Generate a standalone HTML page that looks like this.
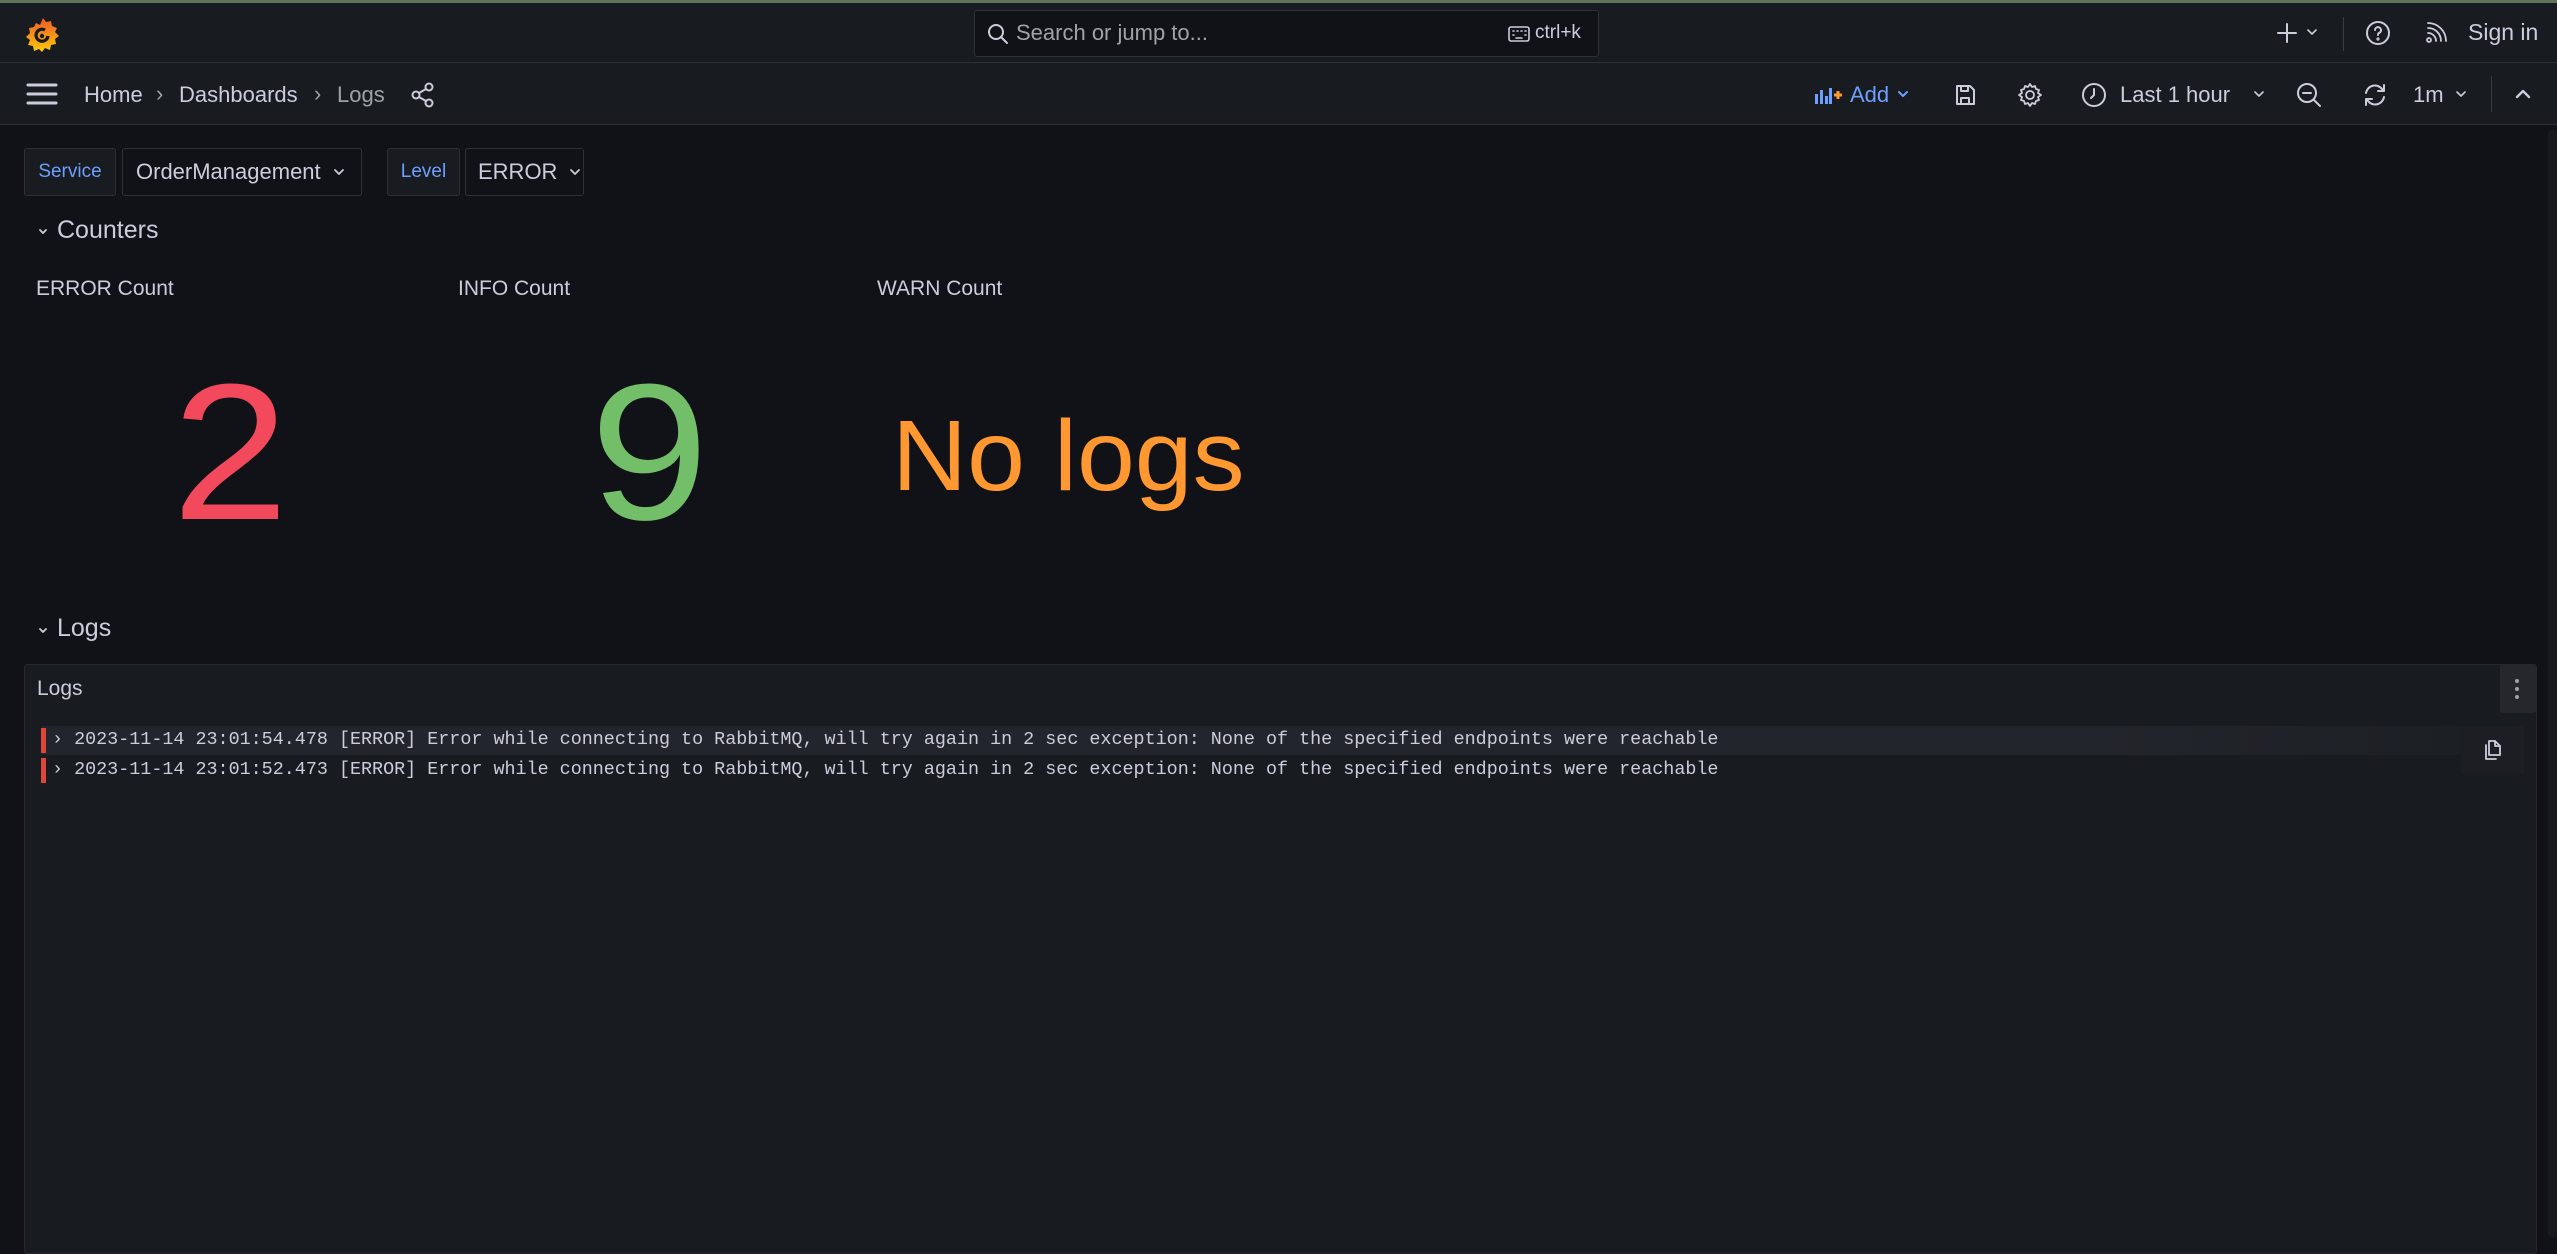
<!DOCTYPE html>
<html><head><meta charset="utf-8"><style>
*{margin:0;padding:0;box-sizing:border-box}
body{width:2557px;height:1237px;background:#111217;font-family:"Liberation Sans",sans-serif;color:#ccccdc;position:relative;overflow:hidden}
.a{position:absolute}
.ic{position:absolute;fill:none;stroke:#ccccdc;stroke-width:2;stroke-linecap:round;stroke-linejoin:round}
.box{position:absolute;border:1px solid #2d3037;border-radius:3px;height:48px;display:flex;align-items:center;font-size:22px;white-space:nowrap}
.mono{font-family:"Liberation Mono",monospace;font-size:18.4px;color:#ccccdc;white-space:pre}
</style></head><body>
<div class="a" style="left:0;top:0;width:2557px;height:3px;background:#5f7358"></div>
<div class="a" style="left:0;top:3px;width:2557px;height:60px;background:#181b1f;border-bottom:1px solid #2c2f35"></div>
<div class="a" style="left:0;top:63px;width:2557px;height:62px;background:#181b1f;border-bottom:1px solid #2c2f35"></div>
<!-- logo -->
<svg class="a" style="left:24px;top:17px" width="38" height="36" viewBox="0 0 38 36"><defs><linearGradient id="g" x1="0" y1="0" x2="0" y2="1"><stop offset="0" stop-color="#f05a28"/><stop offset="1" stop-color="#fbca0a"/></linearGradient></defs><path d="M19 1l3 4 5-1 1 5 5 2-2 4 4 4-4 3 1 5-5 1-1 5-5-2-3 4-3-3-5 2-1-5-5-1 2-5-4-3 4-4-1-5 5-1 2-4 4 2z" fill="url(#g)"/><path d="M24 19a6 6 0 1 1-3-6" fill="none" stroke="#181b1f" stroke-width="3.2"/><circle cx="18" cy="19" r="2.2" fill="#181b1f"/></svg>
<!-- search -->
<div class="a" style="left:974px;top:10px;width:625px;height:47px;background:#111217;border:1px solid #2d3037;border-radius:3px"></div>
<svg class="ic" style="left:987px;top:23px" width="22" height="22" viewBox="0 0 22 22"><circle cx="9" cy="9" r="7"/><path d="M14 14l6 6"/></svg>
<div class="a" style="left:1016px;top:20px;font-size:22px;color:#a0a2ab">Search or jump to...</div>
<svg class="ic" style="left:1508px;top:26px;stroke-width:1.6" width="22" height="16" viewBox="0 0 22 16"><rect x="1" y="1" width="20" height="14" rx="2"/><path d="M5 5h1M9 5h1M13 5h1M17 5h1M5 9h1M17 9h1M8 12h6"/></svg>
<div class="a" style="left:1535px;top:22px;font-size:19px;color:#ccccdc">ctrl+k</div>
<!-- top right -->
<svg class="ic" style="left:2276px;top:22px" width="22" height="22" viewBox="0 0 22 22"><path d="M11 2v18M2 11h18"/></svg>
<svg class="ic" style="left:2306px;top:28px;stroke-width:1.6" width="12" height="8" viewBox="0 0 12 8"><path d="M2 2l4 4 4-4"/></svg>
<div class="a" style="left:2343px;top:17px;width:1px;height:34px;background:#3a3d44"></div>
<svg class="ic" style="left:2365px;top:20px" width="26" height="26" viewBox="0 0 26 26"><circle cx="13" cy="13" r="11"/><path d="M10 10a3 3 0 1 1 4 3c-1 .5-1 1-1 2"/><circle cx="13" cy="19" r=".6"/></svg>
<svg class="ic" style="left:2425px;top:22px;stroke-width:1.8" width="22" height="22" viewBox="0 0 22 22"><circle cx="4" cy="18" r="2"/><path d="M3 11a8 8 0 0 1 8 8M3 6a13 13 0 0 1 13 13M3 1a18 18 0 0 1 18 18"/></svg>
<div class="a" style="left:2468px;top:19px;font-size:23px;color:#ccccdc">Sign in</div>
<!-- second bar -->
<svg class="ic" style="left:26px;top:82px;stroke-width:3" width="32" height="24" viewBox="0 0 32 24"><path d="M2 3h28M2 12h28M2 21h28"/></svg>
<div class="a" style="left:84px;top:82px;font-size:22px;color:#ccccdc">Home</div>
<div class="a" style="left:156px;top:81px;font-size:22px;color:#9fa1a9">›</div>
<div class="a" style="left:179px;top:82px;font-size:22px;color:#ccccdc">Dashboards</div>
<div class="a" style="left:314px;top:81px;font-size:22px;color:#9fa1a9">›</div>
<div class="a" style="left:337px;top:82px;font-size:22px;color:#9fa1a9">Logs</div>
<svg class="ic" style="left:410px;top:82px" width="26" height="26" viewBox="0 0 26 26"><circle cx="19" cy="5" r="3.5"/><circle cx="6" cy="13" r="3.5"/><circle cx="19" cy="21" r="3.5"/><path d="M9 11l7-4M9 15l7 4"/></svg>
<!-- right toolbar -->
<svg class="a" style="left:1815px;top:86px" width="28" height="18" viewBox="0 0 28 18"><g fill="#6e9fff"><rect x="0" y="8" width="3" height="10"/><rect x="5" y="4" width="3" height="14"/><rect x="10" y="10" width="3" height="8"/><rect x="14" y="2" width="3" height="16"/></g><path d="M19 9h8M23 5v8" stroke="#ff9830" stroke-width="3"/></svg>
<div class="a" style="left:1850px;top:82px;font-size:22px;color:#6e9fff">Add</div>
<svg class="ic" style="left:1897px;top:90px;stroke:#6e9fff" width="12" height="8" viewBox="0 0 12 8"><path d="M2 2l4 4 4-4"/></svg>
<svg class="ic" style="left:1953px;top:83px" width="24" height="24" viewBox="0 0 24 24"><path d="M4 3h13l4 4v14H4z"/><path d="M8 3v5h7V3M8 21v-6h8v6"/></svg>
<svg class="ic" style="left:2017px;top:82px;stroke-width:1.8" width="26" height="26" viewBox="0 0 26 26"><circle cx="13" cy="13" r="4"/><path d="M13 2l2 3 3-1 1 3 3 1-1 3 3 2-3 2 1 3-3 1-1 3-3-1-2 3-2-3-3 1-1-3-3-1 1-3-3-2 3-2-1-3 3-1 1-3 3 1z"/></svg>
<svg class="ic" style="left:2081px;top:82px" width="26" height="26" viewBox="0 0 26 26"><circle cx="13" cy="13" r="11"/><path d="M13 7v6l-3 3"/></svg>
<div class="a" style="left:2120px;top:82px;font-size:22px;color:#ccccdc">Last 1 hour</div>
<svg class="ic" style="left:2253px;top:90px;stroke-width:1.6" width="12" height="8" viewBox="0 0 12 8"><path d="M2 2l4 4 4-4"/></svg>
<svg class="ic" style="left:2296px;top:82px" width="26" height="26" viewBox="0 0 26 26"><circle cx="11" cy="11" r="9"/><path d="M7 11h8M18 18l6 6"/></svg>
<svg class="ic" style="left:2362px;top:82px" width="26" height="26" viewBox="0 0 26 26"><path d="M4 11a9 9 0 0 1 16-4l2 2M22 15a9 9 0 0 1-16 4l-2-2M22 3v6h-6M4 23v-6h6"/></svg>
<div class="a" style="left:2413px;top:82px;font-size:22px;color:#ccccdc">1m</div>
<svg class="ic" style="left:2455px;top:90px;stroke-width:1.6" width="12" height="8" viewBox="0 0 12 8"><path d="M2 2l4 4 4-4"/></svg>
<div class="a" style="left:2491px;top:76px;width:1px;height:36px;background:#3a3d44"></div>
<svg class="ic" style="left:2514px;top:88px;stroke-width:2.4" width="18" height="12" viewBox="0 0 18 12"><path d="M3 9l6-6 6 6"/></svg>
<!-- variables -->
<div class="box" style="left:24px;top:148px;width:92px;background:#181b1f;justify-content:center;font-size:19px;color:#6e9fff">Service</div>
<div class="box" style="left:122px;top:148px;width:240px;background:#111217;padding-left:13px;color:#ccccdc">OrderManagement<svg class="ic" style="position:static;margin-left:12px;stroke-width:1.8" width="12" height="8" viewBox="0 0 12 8"><path d="M2 2l4 4 4-4"/></svg></div>
<div class="box" style="left:387px;top:148px;width:73px;background:#181b1f;justify-content:center;font-size:19px;color:#6e9fff">Level</div>
<div class="box" style="left:465px;top:148px;width:119px;background:#111217;padding-left:12px;color:#ccccdc">ERROR<svg class="ic" style="position:static;margin-left:12px;stroke-width:1.8" width="12" height="8" viewBox="0 0 12 8"><path d="M2 2l4 4 4-4"/></svg></div>
<!-- counters row -->
<svg class="ic" style="left:38px;top:228px;stroke-width:1.8" width="10" height="8" viewBox="0 0 10 8"><path d="M2 2l3 3 3-3"/></svg>
<div class="a" style="left:57px;top:216px;font-size:25px;color:#ccccdc">Counters</div>
<div class="a" style="left:36px;top:277px;font-size:21px;color:#ccccdc">ERROR Count</div>
<div class="a" style="left:458px;top:277px;font-size:21px;color:#ccccdc">INFO Count</div>
<div class="a" style="left:877px;top:277px;font-size:21px;color:#ccccdc">WARN Count</div>
<div class="a" style="left:172px;top:356px;font-size:194px;line-height:1;color:#f2495c;transform:scaleX(1.08);transform-origin:left">2</div>
<div class="a" style="left:590px;top:356px;font-size:194px;line-height:1;color:#73bf69;transform:scaleX(1.1);transform-origin:left">9</div>
<div class="a" style="left:892px;top:406px;font-size:100px;line-height:1;color:#ff9830;transform:scaleX(1.04);transform-origin:left">No logs</div>
<!-- logs row -->
<svg class="ic" style="left:38px;top:627px;stroke-width:1.8" width="10" height="8" viewBox="0 0 10 8"><path d="M2 2l3 3 3-3"/></svg>
<div class="a" style="left:57px;top:614px;font-size:25px;color:#ccccdc">Logs</div>
<div class="a" style="left:24px;top:664px;width:2513px;height:590px;background:#181b1f;border:1px solid #25282e;border-radius:3px"></div>
<div class="a" style="left:37px;top:677px;font-size:21px;color:#ccccdc">Logs</div>
<div class="a" style="left:2500px;top:664px;width:36px;height:49px;background:#25272d;border-radius:3px"></div>
<svg class="a" style="left:2513px;top:678px" width="8" height="22" viewBox="0 0 8 22"><g fill="#9fa1a9"><circle cx="4" cy="3" r="2"/><circle cx="4" cy="11" r="2"/><circle cx="4" cy="19" r="2"/></g></svg>
<div class="a" style="left:41px;top:726px;width:2426px;height:29px;background:linear-gradient(90deg,#22252b 85%,#1c1f24)"></div>
<div class="a" style="left:41px;top:728px;width:5px;height:25px;background:#e0453a"></div>
<div class="a" style="left:41px;top:758px;width:5px;height:25px;background:#e0453a"></div>
<div class="a mono" style="left:52px;top:729px">› 2023-11-14 23:01:54.478 [ERROR] Error while connecting to RabbitMQ, will try again in 2 sec exception: None of the specified endpoints were reachable</div>
<div class="a mono" style="left:52px;top:759px">› 2023-11-14 23:01:52.473 [ERROR] Error while connecting to RabbitMQ, will try again in 2 sec exception: None of the specified endpoints were reachable</div>
<div class="a" style="left:2461px;top:726px;width:63px;height:48px;background:#1c1e23"></div>
<svg class="ic" style="left:2482px;top:739px;stroke-width:1.8" width="20" height="22" viewBox="0 0 20 22"><path d="M7 2h6l5 5v9H7z"/><path d="M13 2v5h5M4 6v14h10"/></svg>
<div class="a" style="left:2548px;top:130px;width:9px;height:1107px;background:#17191d;border-radius:4px"></div>
</body></html>
